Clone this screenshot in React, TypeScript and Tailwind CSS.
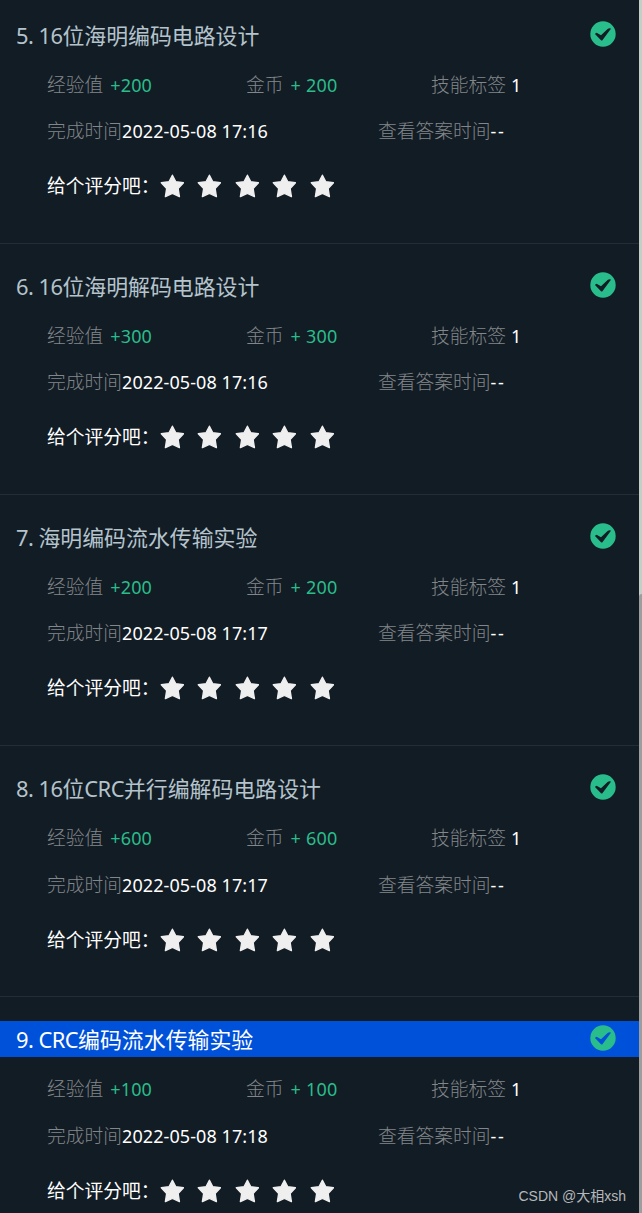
interface Task {
  id: number;
  // latin and CJK runs are split because their tracking differs
  latin: string;
  name: string;
  tail?: string;
  reward: number;
  finishedAt: string;
}

const TASKS: Task[] = [
  { id: 5, latin: "16", name: "位海明编码电路设计", reward: 200, finishedAt: "2022-05-08 17:16" },
  { id: 6, latin: "16", name: "位海明解码电路设计", reward: 300, finishedAt: "2022-05-08 17:16" },
  { id: 7, latin: "", name: "海明编码流水传输实验", reward: 200, finishedAt: "2022-05-08 17:17" },
  { id: 8, latin: "16", name: "位", tail: "并行编解码电路设计", reward: 600, finishedAt: "2022-05-08 17:17" },
  { id: 9, latin: "CRC", name: "编码流水传输实验", reward: 100, finishedAt: "2022-05-08 17:18" },
];

const ACTIVE_ID = 9;

function CheckIcon() {
  return (
    <svg viewBox="0 0 26 26" className="h-[26px] w-[26px] shrink-0">
      <path
        fill="#29bd8b"
        fillRule="evenodd"
        d="M13 .3a12.7 12.7 0 1 0 0 25.4A12.7 12.7 0 0 0 13 .3ZM5.2 13.2Q5 12 6.6 11.8L11 14.2 17.6 7.9Q18.6 7.2 20.8 7.4Q20.9 7.9 20 9L12.4 19.2Q11.7 20 11 19.2Z"
      />
    </svg>
  );
}

function Star() {
  return (
    <svg viewBox="0 0 24 24" className="h-6 w-6">
      <path
        fill="#efefef"
        stroke="#efefef"
        strokeWidth="1.4"
        strokeLinejoin="round"
        d="M12.4 1.2l3.4 6.6 7.7 1-5.4 5.6 1.3 8.2-7-3.3-7 3.3 1.3-8.2L1.3 8.8l7.7-1Z"
      />
    </svg>
  );
}

function Label({ children }: { children: string }) {
  return <span className="font-light text-[#82868a]">{children}</span>;
}

function TaskItem({ task }: { task: Task }) {
  const active = task.id === ACTIVE_ID;

  return (
    <li className="flex h-[251.2px] shrink-0 flex-col border-b border-[#222d36] pt-6">
      <div
        className={`flex h-9 items-center justify-between pr-[23px] pl-4 ${
          active ? "bg-[#0051d9] text-white" : "text-[#b4c3cc]"
        }`}
      >
        <h2 className="flex items-baseline pt-0.5 text-[21.9px] leading-9 whitespace-pre">
          <span className="tracking-[-0.55px]">{`${task.id}. ${task.latin}`}</span>
          <span>{task.name}</span>
          {task.tail && <span className="tracking-[-0.55px]">CRC</span>}
          {task.tail && <span>{task.tail}</span>}
        </h2>
        <div className="pb-0.5">
          <CheckIcon />
        </div>
      </div>

      <div className="mt-[18px] flex h-7 items-baseline pl-[47px] leading-7">
        <div className="flex w-[199px] items-baseline gap-[7px]">
          <Label>经验值</Label>
          <span className="text-[18px] tracking-[0.15px] text-[#29bd8b]">+{task.reward}</span>
        </div>
        <div className="flex w-[185px] items-baseline gap-[7px]">
          <Label>金币</Label>
          <span className="text-[18px] tracking-[0.2px] text-[#29bd8b]">+ {task.reward}</span>
        </div>
        <div className="flex items-baseline gap-[5px]">
          <Label>技能标签</Label>
          <span className="text-[18px] text-white">1</span>
        </div>
      </div>

      <div className="mt-[18.5px] flex h-7 items-baseline pl-[47px] leading-7">
        <div className="flex w-[331px] items-baseline">
          <Label>完成时间</Label>
          <span className="text-[18px] tracking-[0.08px] text-white">{task.finishedAt}</span>
        </div>
        <div className="flex items-baseline">
          <Label>查看答案时间</Label>
          <span className="text-[18px] tracking-[1.8px] text-white">--</span>
        </div>
      </div>

      <div className="mt-[27px] flex h-7 items-center pl-[47px] leading-7 text-white">
        <span className="w-[113px] whitespace-nowrap">给个评分吧：</span>
        <div className="flex gap-[13.4px]">
          {[1, 2, 3, 4, 5].map((n) => (
            <Star key={n} />
          ))}
        </div>
      </div>
    </li>
  );
}

export default function App() {
  return (
    <div className="relative flex h-[1213px] w-[642px] overflow-hidden bg-[#121c24] font-['Noto_Sans','Noto_Sans_CJK_SC',sans-serif] text-[18.75px]">
      <ul className="-mt-[7.5px] flex min-w-0 flex-1 flex-col">
        {TASKS.map((task) => (
          <TaskItem key={task.id} task={task} />
        ))}
      </ul>

      <div className="flex w-[3px] flex-col bg-[#c3cec6]">
        <div className="mt-[594px] flex-1 rounded-tl-[3px] bg-[#9d9d9d]" />
      </div>

      <span className="absolute right-4 bottom-[6px] font-['Liberation_Sans','Noto_Sans_CJK_SC',sans-serif] text-[14px] leading-[22px] text-[#b5b8ba]">
        CSDN @大相xsh
      </span>
    </div>
  );
}
